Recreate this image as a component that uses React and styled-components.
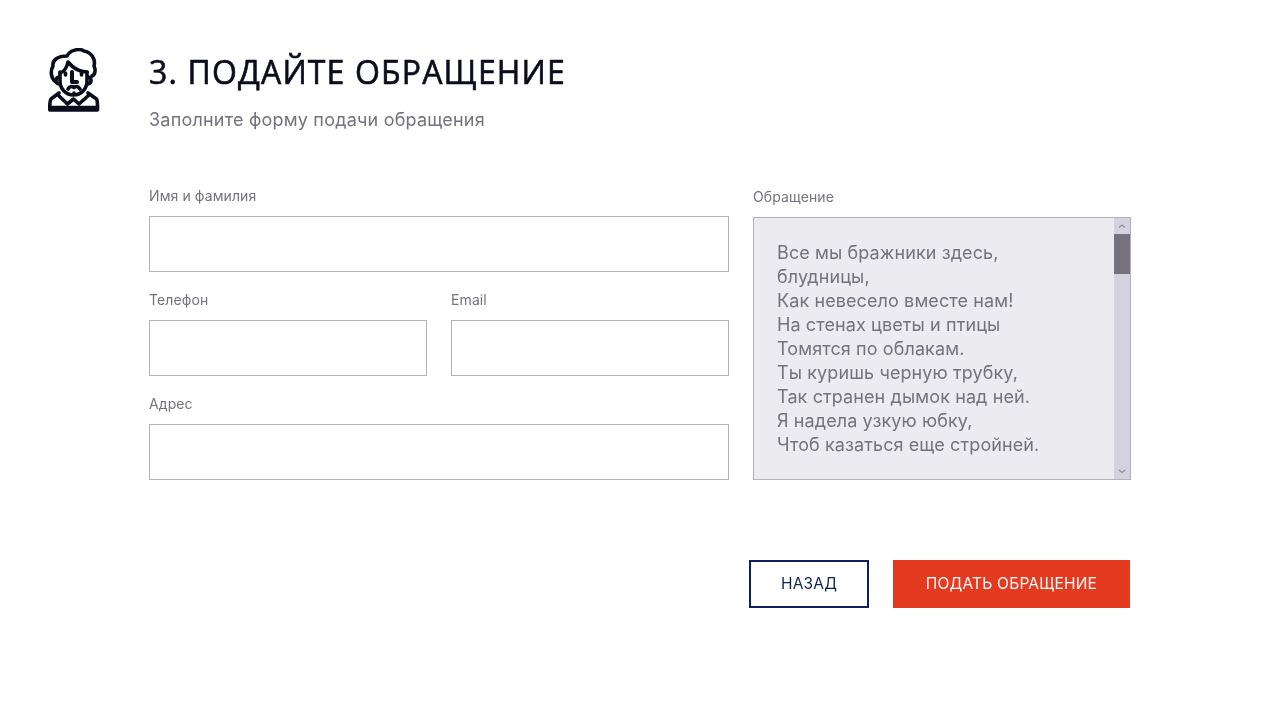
import React from "react";
import styled, { createGlobalStyle } from "styled-components";

const POEM = [
  "Все мы бражники здесь,",
  "блудницы,",
  "Как невесело вместе нам!",
  "На стенах цветы и птицы",
  "Томятся по облакам.",
  "Ты куришь черную трубку,",
  "Так странен дымок над ней.",
  "Я надела узкую юбку,",
  "Чтоб казаться еще стройней.",
];

const PersonIcon = () => (
  <svg width="52" height="65" viewBox="0 0 52 65" fill="none" stroke="#0b0d1c" strokeWidth="3.6" strokeLinecap="round" strokeLinejoin="round">
    <path d="M8 34C3 31 2 23 5 18C4 12 10 8 19 8C22 2 31 0 36 3C43 4 48 11 46 18C48 22 47 27 44 28" />
    <path d="M12 25C16 24 19 19 20 14C25 20 32 24 39 24" />
    <path d="M12 24V33C12 41 18 47 25.5 47C33 47 39 41 39 33V24" />
    <path d="M11 29C7 29 7 36 11 36M40 29C44 29 44 36 40 36" />
    <path d="M24 24V34H29" strokeWidth="4" />
    <path d="M17.5 25V27M33.5 25V27" />
    <path d="M20 41C22 38 24 38 26 39.5C28 38 30 38 32 41" />
    <path d="M26 45V45.5" />
    <path d="M11 45L3 51C1.5 53 1.8 58 1.8 62H49.5C49.5 58 49.8 53 48.5 51L40 45" />
    <path d="M10 47L19.5 56L25.5 51L31 56L41 47" />
    <path d="M2.5 60H48.5" strokeWidth="4.4" />
  </svg>
);

const App = () => (
  <>
    <GlobalStyle />
    <Page>
      <Side>
        <PersonIcon />
      </Side>
      <Main>
        <Title>3. ПОДАЙТЕ ОБРАЩЕНИЕ</Title>
        <Subtitle>Заполните форму подачи обращения</Subtitle>
        <FormGrid>
          <Fields>
            <Field>
              <Label>Имя и фамилия</Label>
              <Input />
            </Field>
            <Pair>
              <Field>
                <Label>Телефон</Label>
                <Input />
              </Field>
              <Field>
                <Label>Email</Label>
                <Input />
              </Field>
            </Pair>
            <Field>
              <Label>Адрес</Label>
              <Input />
            </Field>
          </Fields>
          <MessageField>
            <Label>Обращение</Label>
            <MessageBox>
              <MessageText>
                {POEM.map((line) => (
                  <div key={line}>{line}</div>
                ))}
              </MessageText>
              <Scrollbar>
                <ScrollButton>
                  <svg width="8" height="5" viewBox="0 0 8 5" fill="none" stroke="#8d8a96" strokeWidth="1.1">
                    <path d="M1 3.5L4 1L7 3.5" />
                  </svg>
                </ScrollButton>
                <ScrollThumb />
                <ScrollTrack />
                <ScrollButton>
                  <svg width="8" height="5" viewBox="0 0 8 5" fill="none" stroke="#8d8a96" strokeWidth="1.1">
                    <path d="M1 1L4 3.5L7 1" />
                  </svg>
                </ScrollButton>
              </Scrollbar>
            </MessageBox>
          </MessageField>
        </FormGrid>
        <Actions>
          <BackButton>НАЗАД</BackButton>
          <SubmitButton>ПОДАТЬ ОБРАЩЕНИЕ</SubmitButton>
        </Actions>
      </Main>
    </Page>
  </>
);

const GlobalStyle = createGlobalStyle`
  html, body {
    margin: 0;
    background: #fff;
  }
  * {
    box-sizing: border-box;
  }
`;

const Page = styled.div`
  display: flex;
  width: 1280px;
  height: 720px;
  padding: 48px 0 0 48px;
  font-family: Inter, "Noto Sans", sans-serif;
  overflow: hidden;
  will-change: transform;
`;

const Side = styled.div`
  width: 101px;
  flex: none;
`;

const Main = styled.div`
  width: 982px;
`;

const Title = styled.h1`
  margin: 0;
  font-family: "Open Sans", "Noto Sans", sans-serif;
  font-size: 32px;
  line-height: 48px;
  font-weight: 400;
  letter-spacing: 1.15px;
  -webkit-text-stroke: 0.6px #0b0d1c;
  color: #0b0d1c;
`;

const Subtitle = styled.p`
  margin: 11px 0 0;
  font-size: 18px;
  line-height: 26px;
  letter-spacing: 0.2px;
  color: #75727d;
`;

const FormGrid = styled.div`
  display: flex;
  gap: 24px;
  margin-top: 51px;
`;

const Fields = styled.div`
  width: 580px;
  display: flex;
  flex-direction: column;
  gap: 16px;
`;

const Pair = styled.div`
  display: grid;
  grid-template-columns: 1fr 1fr;
  gap: 24px;
`;

const Field = styled.label`
  display: block;
`;

const Label = styled.div`
  font-size: 14px;
  line-height: 24px;
  letter-spacing: 0.1px;
  color: #75727d;
  margin-bottom: 8px;
`;

const Input = styled.input`
  display: block;
  width: 100%;
  height: 56px;
  border: 1px solid #b3b1ba;
  border-radius: 0;
  background: #fff;
  outline: none;
`;

const MessageField = styled.div`
  width: 378px;
  padding-top: 1px;
`;

const MessageBox = styled.div`
  display: flex;
  height: 263px;
  border: 1px solid #b3b1ba;
  background: #ecebf0;
`;

const MessageText = styled.div`
  flex: 1;
  padding: 23px 0 0 23px;
  font-size: 18px;
  line-height: 24px;
  letter-spacing: 0.1px;
  color: #75727d;
`;

const Scrollbar = styled.div`
  width: 16px;
  display: flex;
  flex-direction: column;
  background: #d4d2de;
`;

const ScrollButton = styled.div`
  height: 16px;
  display: flex;
  align-items: center;
  justify-content: center;
`;

const ScrollThumb = styled.div`
  height: 40px;
  background: #75727d;
`;

const ScrollTrack = styled.div`
  flex: 1;
`;

const Actions = styled.div`
  display: flex;
  justify-content: flex-end;
  gap: 24px;
  margin-top: 80px;
  padding-right: 1px;
`;

const BaseButton = styled.button`
  height: 48px;
  padding: 0 0 1px;
  border-radius: 0;
  font-family: Inter, "Noto Sans", sans-serif;
  font-size: 15.5px;
  letter-spacing: 0.2px;
`;

const BackButton = styled(BaseButton)`
  width: 120px;
  border: 2px solid #0f2158;
  background: #fff;
  color: #0f2158;
`;

const SubmitButton = styled(BaseButton)`
  width: 237px;
  border: none;
  background: #e33a20;
  color: #fff;
`;

export default App;
